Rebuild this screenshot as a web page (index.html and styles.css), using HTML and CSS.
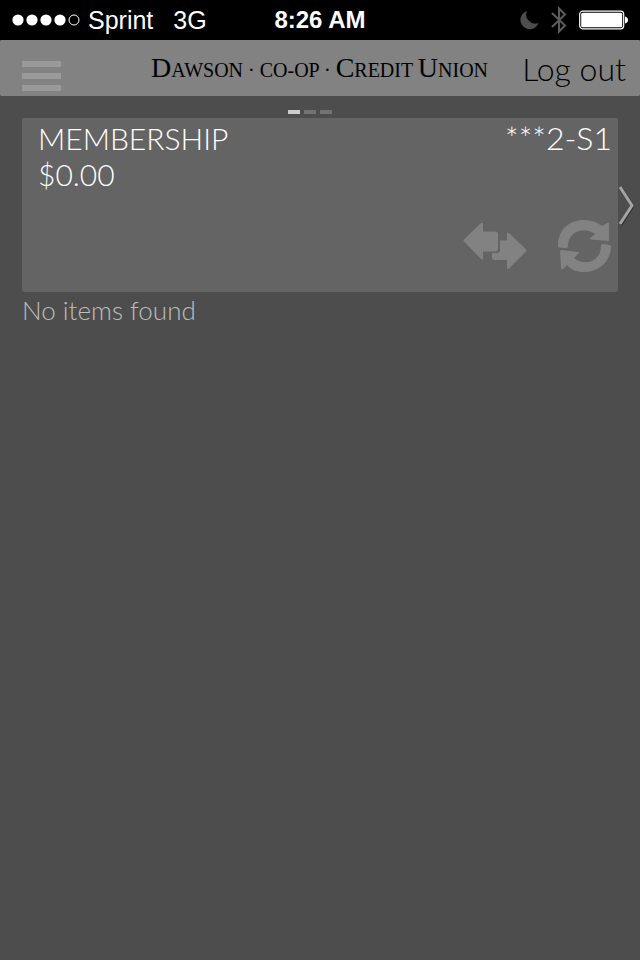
FILE: index.html
```html
<!DOCTYPE html>
<html lang="en">
<head>
    <meta charset="UTF-8">
    <meta name="viewport" content="width=device-width, initial-scale=1.0">
    <title>Dawson Co-op Credit Union</title>
    <link rel="stylesheet" href="styles.css">
</head>
<body>
    <div class="status-bar">
        <div class="carrier">
            <svg class="signal" width="68" height="12" viewBox="0 0 68 12">
                <circle cx="6" cy="6" r="5.6"/>
                <circle cx="20" cy="6" r="5.6"/>
                <circle cx="34" cy="6" r="5.6"/>
                <circle cx="48" cy="6" r="5.6"/>
                <circle class="empty" cx="62" cy="6" r="5"/>
            </svg>
            <span>Sprint</span>
            <span class="network">3G</span>
        </div>
        <div class="time">8:26 AM</div>
        <div class="indicators">
            <svg width="19" height="20" viewBox="0 0 19 20">
                <path fill="#4d4d4d" d="M7 1A9.300 9.300 0 1 0 18.500 13A9 9 0 0 1 7 1Z"/>
            </svg>
            <svg width="16" height="28" viewBox="0 0 16 28">
                <path fill="none" stroke="#5c5c5c" stroke-width="2" d="M1 7L14 19.500L8 25.500V2.500L14 8.500L1 21"/>
            </svg>
            <svg width="49" height="20" viewBox="0 0 49 20">
                <rect x=".7" y="1.200" width="44" height="17.600" rx="3" fill="none" stroke="#fff" stroke-width="1.200"/>
                <rect x="2.200" y="2.700" width="41" height="14.600" rx="1.500" fill="#fff"/>
                <path fill="#fff" d="M46 6.500Q49 7.500 49 10T46 13.500Z"/>
            </svg>
        </div>
    </div>

    <header class="header">
        <button class="menu" aria-label="Menu">
            <span></span>
            <span></span>
            <span></span>
        </button>
        <div class="logo"><b>D</b>AWSON · CO-OP · <b>C</b>REDIT <b>U</b>NION</div>
        <a href="#" class="logout">Log out</a>
    </header>

    <main class="accounts">
        <div class="pager">
            <span class="active"></span>
            <span></span>
            <span></span>
        </div>
        <section class="card">
            <div class="card-title">
                <h1>MEMBERSHIP</h1>
                <span>***2-S1</span>
            </div>
            <div class="balance">$0.00</div>
            <div class="actions">
                <button aria-label="Transfer">
                    <svg width="64" height="48" viewBox="0 0 64 48">
                        <path d="M1 17.500Q0 18.500 1 19.500L18 37Q20 38 20 36V29.500H32Q35 29.500 35 26.500V12.500Q35 9.500 32 9.500H20V2Q20 0 18 1Z"/>
                        <path d="M37 18.500H44V12Q44 9.500 46 11L63 27.500Q64 28.500 63 29.500L46 46.500Q44 48 44 45.500V38H31Q29 38 29 36V32Q29 31 30 31H34Q37 31 37 28Z"/>
                    </svg>
                </button>
                <button aria-label="Refresh">
                    <svg width="54" height="54" viewBox="0 0 54 54">
                        <path d="M1 28.500Q0 28.500 0 27C0 10 12 1 26 1C33 1 39 3 44 7L49 4Q51 3 51 5V22L33 20.500Q31 20 33 18.500L37 15C27 7 10 12 10 27Q10 29 8 29Z"/>
                        <path d="M45 25L52 26Q53 26 53 28C52 44 40 53 26 53C19 53 13 51 9 46L5 50Q3 51 3 48L2 32Q2 31 4 31L20 33Q22 33 20 35L16 39C27 48 43 42 43 27Q43 25 45 25Z"/>
                    </svg>
                </button>
            </div>
            <button class="next" aria-label="Next account">
                <svg width="16" height="40" viewBox="0 0 16 40">
                    <path class="shadow" d="M3 2L15 20L3 39"/>
                    <path d="M2 1L14 19.500L2 38"/>
                </svg>
            </button>
        </section>
        <p class="empty-list">No items found</p>
    </main>
</body>
</html>
```
FILE: styles.css
```css
* {
    margin: 0;
    padding: 0;
    box-sizing: border-box;
}

body {
    min-height: 100vh;
    background: #4d4d4d;
    font-family: Lato, 'Open Sans', sans-serif;
    font-weight: 300;
    color: #ffffff;
}

button {
    border: none;
    background: none;
    cursor: pointer;
}

svg {
    display: block;
}

.status-bar {
    display: grid;
    grid-template-columns: 1fr auto 1fr;
    align-items: center;
    height: 40px;
    padding: 0 12px;
    background: #000000;
    font-family: 'Liberation Sans', Arial, sans-serif;
    font-size: 24px;
    font-weight: 400;
}

.carrier,
.indicators {
    display: flex;
    align-items: center;
    gap: 8px;
}

.carrier {
    font-size: 25px;
}

.indicators {
    justify-content: flex-end;
    gap: 12px;
}

.network {
    margin-left: 12px;
}

.signal {
    fill: #ffffff;
}

.signal .empty {
    fill: none;
    stroke: #ffffff;
}

.time {
    font-weight: 700;
}

.header {
    display: flex;
    align-items: center;
    justify-content: space-between;
    height: 56px;
    padding: 0 14px 0 22px;
    border-radius: 2px;
    background: #828282;
    color: #000000;
}

.menu {
    display: flex;
    flex-direction: column;
    gap: 6px;
    padding-top: 16px;
}

.menu span {
    width: 39px;
    height: 6px;
    background: #9a9a9a;
}

.logo {
    margin-left: 56px;
    font-family: 'Liberation Serif', 'Times New Roman', serif;
    font-size: 20px;
    font-weight: 400;
    white-space: nowrap;
}

.logo b {
    font-size: 28px;
    font-weight: 400;
}

.logout {
    color: #000000;
    font-size: 32px;
    text-decoration: none;
    white-space: nowrap;
}

.accounts {
    padding: 0 22px;
}

.pager {
    display: flex;
    align-items: center;
    justify-content: center;
    gap: 4px;
    height: 22px;
    padding: 10px 20px 0 0;
}

.pager span {
    width: 12px;
    height: 4px;
    background: #737373;
}

.pager .active {
    background: #cccccc;
}

.card {
    position: relative;
    padding: 2px 6px 19px 16px;
    border-radius: 2px;
    background: #646464;
    font-size: 32px;
    line-height: 36px;
}

.card-title {
    display: flex;
    justify-content: space-between;
}

.card h1 {
    font-size: 30px;
    font-weight: 300;
}

.balance {
    font-size: 30px;
}

.actions {
    display: flex;
    align-items: center;
    justify-content: flex-end;
    gap: 31px;
    padding-top: 27px;
}

.actions svg {
    fill: #828282;
}

/* sits in the page margin beside the card */
.next {
    position: absolute;
    top: 68px;
    right: -16px;
}

.next path {
    fill: none;
    stroke: #a3a3a3;
    stroke-width: 3;
}

.next .shadow {
    stroke: #333333;
}

.empty-list {
    color: #bdbdbd;
    font-size: 26px;
    line-height: 36px;
}
```
